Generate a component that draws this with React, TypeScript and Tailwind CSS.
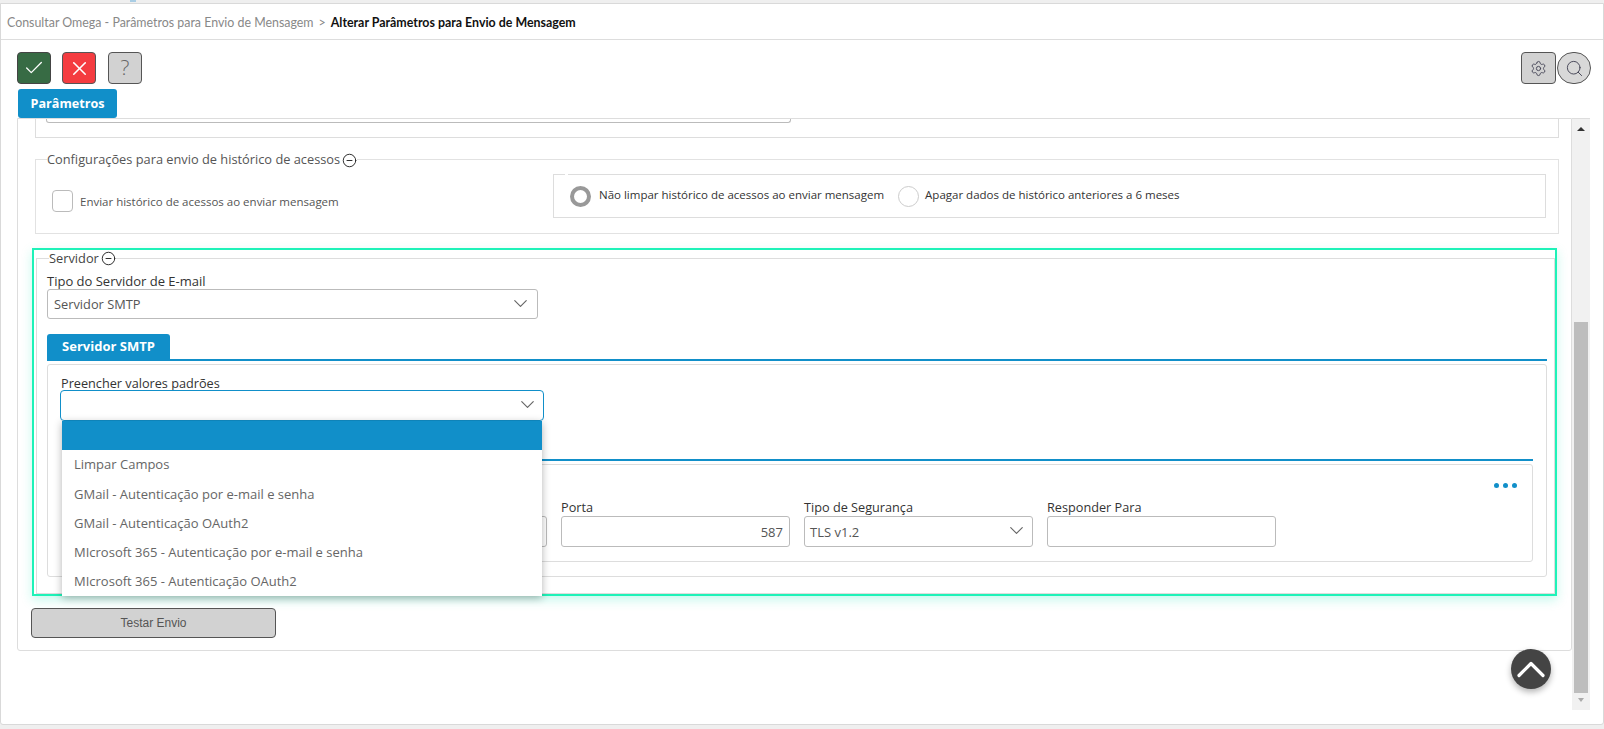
import { Check, ChevronDown, CircleMinus, Search, Settings, X } from 'lucide-react';

const options = [
  'Limpar Campos',
  'GMail - Autenticação por e-mail e senha',
  'GMail - Autenticação OAuth2',
  'MIcrosoft 365 - Autenticação por e-mail e senha',
  'MIcrosoft 365 - Autenticação OAuth2',
];

function Toolbar() {
  return (
    <div className="flex h-[49px] items-start pl-[16px] pr-[12px] pt-[12px]">
      <button className="mr-[11px] flex h-[32px] w-[34px] items-center justify-center rounded-[4px] border border-[#444] bg-[#376b44] text-white">
        <Check size={22} strokeWidth={1.4} />
      </button>
      <button className="mr-[12px] flex h-[32px] w-[34px] items-center justify-center rounded-[4px] border border-[#555] bg-[#f43c40] text-white">
        <X size={23} strokeWidth={1.6} />
      </button>
      <button className="flex h-[32px] w-[34px] items-center justify-center rounded-[4px] border border-[#555] bg-[#d2d2d2] text-[21px] font-light text-[#666]">
        ?
      </button>
      <button className="ml-auto flex h-[32px] w-[35px] items-center justify-center rounded-[4px] border border-[#555] bg-[#d2d2d2] text-[#445]">
        <Settings size={17} strokeWidth={1.3} />
      </button>
      <button className="ml-[1px] flex h-[32px] w-[34px] items-center justify-center rounded-full border border-[#555] bg-[#d8d8d8] text-[#445]">
        <Search size={19} strokeWidth={1.2} />
      </button>
    </div>
  );
}

function HistoryFieldset() {
  return (
    <fieldset className="ml-[17px] mt-[11px] h-[85px] w-[1524px] border border-[#e2e2e2]">
      <legend className="ml-[11px] flex h-[20px] items-center pt-[2px] text-[12.8px] text-[#555]">
        Configurações para envio de histórico de acessos
        <CircleMinus size={15} strokeWidth={1.5} className="ml-[2px] text-[#222]" />
      </legend>
      <div className="flex items-start">
        <div className="ml-[16px] mt-[21px] flex w-[501px] items-center">
          <span className="h-[22px] w-[21px] rounded-[4px] border border-[#bbb]" />
          <span className="ml-[7px] mt-[1px] text-[11.5px] text-[#555]">Enviar histórico de acessos ao enviar mensagem</span>
        </div>
        <fieldset className="mt-[5px] h-[44px] w-[993px] border border-[#ddd]">
          <legend className="ml-[11px] h-0 w-[3px]" />
          <div className="flex h-full items-center pl-[16px] pt-[1px] text-[11.5px] text-[#333]">
            <span className="h-[21px] w-[21px] rounded-full border-[4px] border-[#999]" />
            <span className="mb-[3px] ml-[8px]">Não limpar histórico de acessos ao enviar mensagem</span>
            <span className="ml-[14px] h-[21px] w-[21px] rounded-full border border-[#ccc]" />
            <span className="mb-[3px] ml-[6px]">Apagar dados de histórico anteriores a 6 meses</span>
          </div>
        </fieldset>
      </div>
    </fieldset>
  );
}

function Field({ label, children }: { label?: string; children: React.ReactNode }) {
  return (
    <div className="w-[229px]">
      <div className="h-[17px] text-[12.7px] leading-[17px] text-[#333]">{label}</div>
      {children}
    </div>
  );
}

const inputBox = 'h-[31px] w-full rounded-[3px] border border-[#bbb] bg-white text-[13px] text-[#555]';

function SmtpPanel() {
  return (
    <div className="mt-[3px] h-[213px] w-[1500px] rounded-[3px] border border-[#ddd] pl-[13px] pt-[11px]">
      <div className="h-[14px] text-[12.7px] leading-[15px] text-[#333]">Preencher valores padrões</div>
      <div className="relative -ml-[1px] w-[484px]">
        <div className="flex h-[31px] items-center justify-end rounded-[4px] border-[1.5px] border-[#118fc9] bg-white pb-[2px] pr-[4px] text-[#666]">
          <ChevronDown size={23} strokeWidth={1.2} />
        </div>
        <div className="absolute left-[2px] top-[31px] z-10 w-[480px] bg-white text-[13px] text-[#666] shadow-[0_2px_8px_rgba(0,0,0,0.3)]">
          <div className="h-[29px] bg-[#118fc9]" />
          {options.map((o) => (
            <div key={o} className="flex h-[29.2px] items-center pl-[12px] pt-[1px]">
              {o}
            </div>
          ))}
        </div>
      </div>
      <div className="mt-[38px] ml-[1px] h-[2px] w-[1471px] bg-[#118fc9]" />
      <div className="mt-[3px] ml-[1px] h-[98px] w-[1471px] rounded-[3px] border border-[#ddd] pl-[12px]">
        <div className="flex h-[34px] items-start justify-end gap-[4px] pr-[15px] pt-[18px]">
          <span className="h-[5px] w-[5px] rounded-full bg-[#118fc9]" />
          <span className="h-[5px] w-[5px] rounded-full bg-[#118fc9]" />
          <span className="h-[5px] w-[5px] rounded-full bg-[#118fc9]" />
        </div>
        <div className="flex gap-[14px]">
          <Field>
            <div className={inputBox} />
          </Field>
          <Field>
            <div className={inputBox} />
          </Field>
          <Field label="Porta">
            <div className={`${inputBox} flex items-center justify-end pr-[6px] pt-[2px]`}>587</div>
          </Field>
          <Field label="Tipo de Segurança">
            <div className={`${inputBox} relative flex items-center pl-[5px] pt-[2px]`}>
              TLS v1.2
              <ChevronDown size={23} strokeWidth={1.2} className="absolute right-[4px] top-[2px] text-[#666]" />
            </div>
          </Field>
          <Field label="Responder Para">
            <div className={inputBox} />
          </Field>
        </div>
      </div>
    </div>
  );
}

function ServerFrame() {
  return (
    <div className="ml-[14px] mt-[14px] h-[348px] w-[1525px] border-2 border-[#1ef2b8] pl-[2px] shadow-[0_4px_10px_rgba(29,233,182,0.25)]">
      <fieldset className="h-[344px] w-[1519px] border border-[#ddd]">
        <legend className="ml-[12px] flex h-[17px] items-center text-[12.8px] text-[#444]">
          Servidor
          <CircleMinus size={15} strokeWidth={1.5} className="ml-[2px] text-[#222]" />
        </legend>
        <div className="pl-[10px] pt-[6px]">
          <div className="h-[16px] text-[13px] leading-[16px] text-[#333]">Tipo do Servidor de E-mail</div>
          <div className="flex h-[30px] w-[491px] items-center justify-between rounded-[3px] border border-[#bbb] pl-[6px] pr-[5px] text-[12.8px] text-[#555]">
            <span className="pt-[1px]">Servidor SMTP</span>
            <ChevronDown size={23} strokeWidth={1.2} className="mb-[2px] text-[#666]" />
          </div>
          <div className="mt-[15px] w-[1500px] border-b-2 border-[#118fc9]">
            <div className="flex h-[25px] w-[123px] items-center justify-center rounded-t-[3px] bg-[#118fc9] text-[13px] font-bold text-white">
              Servidor SMTP
            </div>
          </div>
          <SmtpPanel />
        </div>
      </fieldset>
    </div>
  );
}

export default function App() {
  return (
    <div className="relative h-[729px] w-[1604px] overflow-hidden bg-[#efefef] pt-[3px] font-['Open_Sans',sans-serif]">
      {/* sliver of the page header that is scrolled away above the frame */}
      <span className="absolute left-[130px] top-0 h-[2px] w-[6px] bg-[#a9cde4]" />
      <div className="h-[722px] w-[1604px] rounded-b-[3px] border border-[#d9d9d9] bg-white">
        <div className="flex h-[36px] items-center border-b border-[#ddd] pl-[6px] pt-[3px] font-['Lato',sans-serif] text-[12.4px]">
          <span className="text-[#888]">Consultar Omega - Parâmetros para Envio de Mensagem</span>
          <span className="mx-[5px] text-[#888]">&gt;</span>
          <span className="font-bold text-[#111]">Alterar Parâmetros para Envio de Mensagem</span>
        </div>
        <Toolbar />
        <div className="ml-[17px] flex h-[29px] w-[99px] items-center justify-center rounded-[3px] bg-[#118fc9] pt-[2px] text-[12.6px] font-bold text-white">
          Parâmetros
        </div>
        <div className="ml-[16px] flex items-start">
          <div className="h-[533px] w-[1555px] rounded-b-[3px] border border-[#ddd]">
            <div className="ml-[17px] h-[19px] w-[1524px] border-x border-b border-[#ddd]">
              <div className="ml-[10px] h-[4px] w-[745px] rounded-b-[3px] border-x border-b border-[#bbb]" />
            </div>
            <HistoryFieldset />
            <ServerFrame />
            <button className="ml-[13px] mt-[12px] h-[30px] w-[245px] rounded-[4px] border border-[#555] bg-[#d2d2d2] font-['Liberation_Sans',sans-serif] text-[12px] text-[#555]">
              Testar Envio
            </button>
          </div>
          <div className="flex h-[592px] w-[18px] flex-col border-t border-[#ddd] bg-[#f1f1f1]">
            <div className="flex h-[203px] justify-center pt-[8px]">
              <span className="h-0 w-0 border-x-[4px] border-b-[4px] border-x-transparent border-b-[#333]" />
            </div>
            <div className="mx-[2px] h-[371px] bg-[#bdbdbd]" />
            <div className="flex justify-center pt-[5px]">
              <span className="h-0 w-0 border-x-[3.5px] border-t-[4px] border-x-transparent border-t-[#aaa]" />
            </div>
          </div>
        </div>
      </div>
      <button className="absolute left-[1511px] top-[649px] flex h-[40px] w-[40px] items-center justify-center rounded-full bg-[#444] text-white shadow-[0_3px_6px_rgba(0,0,0,0.3)]">
        <svg width="30" height="18" viewBox="0 0 30 18" fill="none" stroke="currentColor" strokeWidth="3.2" strokeLinecap="round" strokeLinejoin="round">
          <path d="M3 15.5 L15 3.5 L27 15.5" />
        </svg>
      </button>
    </div>
  );
}
